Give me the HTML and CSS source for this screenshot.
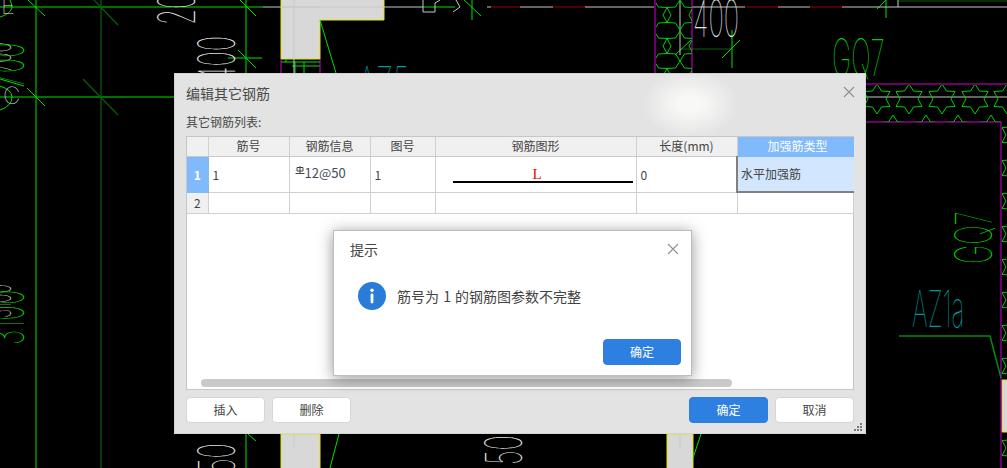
FILE: index.html
```html
<!DOCTYPE html>
<html lang="zh-CN">
<head>
<meta charset="utf-8">
<title>编辑其它钢筋</title>
<link rel="stylesheet" href="styles.css">
</head>
<body>
<main class="desktop">
  <svg class="cad" width="1007" height="468" viewBox="0 0 1007 468" aria-hidden="true">
    <defs>
      <polygon id="star" points="0,-15 4.5,-8 13,-7.5 9,0 13,7.5 4.5,8 0,15 -4.5,8 -13,7.5 -9,0 -13,-7.5 -4.5,-8"/>
      <clipPath id="bandClip"><rect x="866" y="85" width="141" height="37"/></clipPath>
      <clipPath id="colClip"><rect x="656" y="0" width="36" height="74"/></clipPath>
      <clipPath id="sideClip"><rect x="1002" y="120" width="5" height="348"/></clipPath>
    </defs>
    <!-- columns -->
    <path class="col" d="M281 -2V59H320V20H384V-2Z"/>
    <path class="col" d="M281 470V434H320V470Z"/>
    <path class="col" d="M667 470V434H693V470Z"/>
    <path class="col" d="M1002 432V380H1010V432Z"/>
    <!-- grid lines -->
    <path class="g" d="M36 0V468M0 97H174M0 7H263M246 0V73M228 58H262M246 434V468M423 7H455M472 0V20M460 -4L481 16M28 0L45 16M27 88L45 106M240 0L256 16M238 50L256 68M248 434L256 441M0 79L24 86"/>
    <path class="gd" d="M101 0V468M93 -1L118 25M83 79L118 115M898 1H1007M680 49H732"/>
    <path class="g" d="M320 20L336 73M339 434L330 468M701 434L693 458M732 30V68M722 58L740 40M675 55L691 40M886 0L877 9M886 0V18"/>
    <path class="g" d="M281 62H320M286 59V62M295 62V73M304 62V73M292 66H320M0 86Q12 90 12 97Q12 106 0 110M0 17Q10 14 12 8Q12 4 10 0"/>
    <path class="w" d="M263 7H423M294 0V73M281 7H320M487 7H491M520 7H553M585 7H654M692 7H745M778 7H810M842 7H1007M866 97H1007M680 0V55M294 434V447M680 434V447M898 0V7M423 0V12H435V3L440 0M456 0L460 7L453 12"/>
    <path class="r" d="M491 7H520M553 7H585M745 7H778M810 7H842"/>
    <path class="m" d="M281 59V73M320 59V73M655 0V73M692 0V73M866 84H1007M866 122H1001M1001 122V468"/>
    <!-- stars -->
    <g class="s" clip-path="url(#colClip)">
      <use href="#star" x="680" y="15"/><use href="#star" x="680" y="46"/><use href="#star" x="680" y="76"/>
      <use href="#star" x="654" y="15"/><use href="#star" x="654" y="46"/><use href="#star" x="654" y="76"/>
    </g>
    <g class="s" clip-path="url(#bandClip)">
      <use href="#star" x="877" y="99"/><use href="#star" x="909" y="99"/><use href="#star" x="942" y="99"/><use href="#star" x="975" y="99"/><use href="#star" x="1007" y="99"/>
      <use href="#star" x="893" y="130"/><use href="#star" x="926" y="130"/><use href="#star" x="958" y="130"/><use href="#star" x="991" y="130"/>
    </g>
    <g class="s" clip-path="url(#sideClip)">
      <use href="#star" x="1015" y="135"/><use href="#star" x="1015" y="168"/><use href="#star" x="1015" y="201"/><use href="#star" x="1015" y="234"/><use href="#star" x="1015" y="267"/><use href="#star" x="1015" y="300"/><use href="#star" x="1015" y="333"/><use href="#star" x="1015" y="366"/><use href="#star" x="1015" y="448"/>
    </g>
    <path class="gl" d="M899 336H990L1001 378"/>
    <!-- drawing labels -->
    <text class="t tw" transform="translate(195 25) rotate(-90) scale(.72 1.42)">20</text>
    <text class="t tw" transform="translate(235 82) rotate(-90) scale(.72 1.42)">400</text>
    <text class="t tw" transform="translate(693 37) scale(.72 1.42)">400</text>
    <text class="t tgreen" transform="translate(832 76) scale(.72 1.42)">GQ7</text>
    <text class="t tgreen" transform="translate(992 264) rotate(-90) scale(.72 1.42)">GQ7</text>
    <text class="t tteal" transform="translate(912 327) scale(.68 1.42)">AZ1a</text>
    <text class="t tteal" transform="translate(358 103) scale(.78 1.42)">AZ5</text>
    <text class="t tw ts" transform="translate(1 14)">E</text>
    <text class="t tw ts" transform="translate(3 104)">C</text>
    <text class="t tw ts" transform="translate(11 72) rotate(-90) scale(.72 1.42)">700</text>
    <text class="t tgreen" transform="translate(24 87) rotate(-90) scale(.72 1.42)">700</text>
    <text class="t tw ts" transform="translate(11 318) rotate(-90) scale(.66 1.42)">3100</text>
    <text class="t tgreen" transform="translate(24 345) rotate(-90) scale(.72 1.42)">3100</text>
    <text class="t tw" transform="translate(235 473) rotate(-90) scale(.72 1.42)">50</text>
    <text class="t tw" transform="translate(522 465) rotate(-90) scale(.72 1.42)">50</text>
  </svg>

  <section class="dialog">
    <header class="dialog-head">
      <h1 class="dialog-title">编辑其它钢筋</h1>
      <svg class="close" width="12" height="12" viewBox="0 0 12 12" aria-label="关闭"><path d="M1 1L11 11M11 1L1 11"/></svg>
    </header>
    <p class="list-label">其它钢筋列表:</p>
    <div class="grid-wrap">
      <table class="grid">
        <colgroup>
          <col class="c0"><col class="c1"><col class="c2"><col class="c3"><col class="c4"><col class="c5"><col class="c6">
        </colgroup>
        <thead>
          <tr>
            <th></th><th>筋号</th><th>钢筋信息</th><th>图号</th><th>钢筋图形</th><th>长度(mm)</th><th class="active-head">加强筋类型</th>
          </tr>
        </thead>
        <tbody>
          <tr class="row-tall">
            <th class="active-row">1</th>
            <td>1</td>
            <td class="steel"><svg class="bar-symbol" width="10" height="10" viewBox="0 0 10 10"><path d="M2 1.5H8V5H2ZM5 0V7.5M0.5 7.5H9.5"/></svg>12@50</td>
            <td>1</td>
            <td class="shape"><div class="shape-inner"><span class="shape-l">L</span><span class="shape-line"></span></div></td>
            <td>0</td>
            <td class="selected">水平加强筋</td>
          </tr>
          <tr class="row-short">
            <th>2</th><td></td><td></td><td></td><td></td><td></td><td></td>
          </tr>
        </tbody>
      </table>
      <div class="scroll-track"><div class="scroll-thumb"></div></div>
    </div>
    <footer class="dialog-foot">
      <button class="btn">插入</button>
      <button class="btn">删除</button>
      <span class="spacer"></span>
      <button class="btn primary">确定</button>
      <button class="btn">取消</button>
    </footer>
    <svg class="grip" width="9" height="9" viewBox="0 0 9 9" aria-hidden="true"><path d="M6 0h2v2H6zM3 3h2v2H3zM6 3h2v2H6zM0 6h2v2H0zM3 6h2v2H3zM6 6h2v2H6z"/></svg>
  </section>

  <section class="modal">
    <header class="modal-head">
      <h2 class="modal-title">提示</h2>
      <svg class="close" width="12" height="12" viewBox="0 0 12 12" aria-label="关闭"><path d="M1 1L11 11M11 1L1 11"/></svg>
    </header>
    <div class="modal-body">
      <svg class="info" width="28" height="28" viewBox="0 0 28 28" aria-hidden="true">
        <circle cx="14" cy="14" r="14" class="info-bg"/>
        <circle cx="14" cy="8.2" r="1.7" class="info-fg"/>
        <rect x="12.6" y="11.5" width="2.8" height="10" rx="1.4" class="info-fg"/>
      </svg>
      <p class="modal-text">筋号为 1 的钢筋图参数不完整</p>
    </div>
    <footer class="modal-foot"><button class="btn primary">确定</button></footer>
  </section>
</main>
</body>
</html>
```
FILE: styles.css
```css
* { box-sizing: border-box; }
html, body { margin: 0; padding: 0; background: #000; }
body { font-family: "Noto Sans CJK SC", "Liberation Sans", sans-serif; color: #444; }

.desktop { position: relative; width: 1007px; height: 468px; overflow: hidden; background: #000; }
.cad { position: absolute; left: 0; top: 0; }
.cad path, .cad polygon { fill: none; }
.cad .col { fill: #d8d8d8; stroke: #e6e600; stroke-width: 1; }
.cad .g { stroke: #00e000; stroke-width: 1; }
.cad .gd { stroke: #0a5f0a; stroke-width: 1.2; }
.cad .gl { stroke: #0a8a0a; stroke-width: 1.5; }
.cad .w { stroke: #c8c8c8; stroke-width: 1; }
.cad .r { stroke: #a00000; stroke-width: 1; }
.cad .m { stroke: #d000d0; stroke-width: 1; }
.cad .s polygon, .cad .s use { fill: none; stroke: #00d000; stroke-width: 1; }
.t { font-family: Inter, "Liberation Sans", sans-serif; font-size: 36px; font-weight: 100; }
.ts { font-size: 24px; }
.tw { fill: #e4e4e4; }
.tgreen { fill: #00d000; }
.tteal { fill: #009a9a; }

.dialog {
  position: absolute; left: 174px; top: 73px; width: 692px; height: 361px;
  display: flex; flex-direction: column; padding: 0 11px 10px 11px;
  border: 1px solid #d4d4d4;
  background:
    radial-gradient(ellipse 48px 34px at 515px 30px, #f8f8f7 25%, rgba(248,248,247,0) 100%),
    #e2e3e2;
}
.dialog-head { display: flex; align-items: center; justify-content: space-between; height: 37px; }
.dialog-title { margin: 0; font-size: 14px; font-weight: 400; line-height: 20px; color: #4a4a4a; }
.dialog .close { margin-right: -1px; margin-top: -1px; }
.close path { fill: none; stroke: #909090; stroke-width: 1.1; }
.list-label { margin: 1px 0 0; height: 24px; font-size: 12px; line-height: 20px; color: #4a4a4a; }

.grid-wrap { position: relative; flex: 1; background: #fff; border: 1px solid #c6c6c6; }
.grid { width: 666px; table-layout: fixed; border-collapse: collapse; font-size: 12px; }
.c0 { width: 21px; } .c1 { width: 81px; } .c2 { width: 81px; } .c3 { width: 65px; }
.c4 { width: 201px; } .c5 { width: 101px; } .c6 { width: 116px; }
.grid th, .grid td { border: 1px solid #d0d0d0; padding: 0; font-weight: 400; color: #444; }
.grid th { background: #f0f0f0; text-align: center; }
.grid thead th { height: 19px; line-height: 18px; border-top: 0; border-bottom-color: #c8c8c8; }
.grid th:first-child { border-left: 0; }
.grid td { text-align: left; padding: 0 3px 0 4px; background: #fff; }
.grid th.active-head { background: #80bafc; color: #fff; font-weight: 400; border-color: #80bafc; padding-left: 5px; }
.grid th.active-row { background: #80bafc; color: #fff; font-weight: 700; border-color: #80bafc; }
.row-tall { height: 36px; }
.row-short { height: 21px; }
.grid td.steel { padding-left: 5px; white-space: nowrap; font-size: 13px; line-height: 16px; padding-bottom: 2px; color: #3f4e5e; }
.bar-symbol { vertical-align: 2px; }
.bar-symbol path { fill: none; stroke: #444; stroke-width: 1; }
.grid td.shape { padding: 0 3px; }
.shape-inner { position: relative; height: 35px; }
.shape-line { position: absolute; left: 14px; top: 24px; width: 180px; height: 2px; background: #000; }
.shape-l { position: absolute; left: 94px; top: 9px; font-family: "Liberation Serif", serif; font-size: 15px; line-height: 16px; color: #f00000; }
.grid td.selected { background: #d2e7fd; padding-left: 3px; border-left: 2px solid #808080; border-bottom: 2px solid #808080; border-right: 1px solid #d2e7fd; color: #444; font-size: 12px; }

.scroll-track { position: absolute; left: 14px; right: 0; bottom: 2px; height: 8px; }
.scroll-thumb { width: 531px; height: 8px; border-radius: 4px; background: #c9c9c9; }

.dialog-foot { display: flex; gap: 7px; margin-top: 7px; height: 26px; }
.spacer { flex: 1; }
.btn {
  width: 79px; height: 26px; padding: 0; border: 1px solid #d6d6d6; border-radius: 4px;
  background: #fff; color: #444; font: 400 12px/1 "Noto Sans CJK SC", "Liberation Sans", sans-serif;
}
.btn.primary { background: #2d7fe0; border-color: #2d7fe0; color: #fff; }
.grip { position: absolute; right: 2px; bottom: 1px; }
.grip path { fill: #7c7c7c; }

.modal {
  position: absolute; left: 333px; top: 230px; width: 359px; height: 146px;
  display: flex; flex-direction: column; background: #fff;
  border: 1px solid #bdbdbd; box-shadow: 0 2px 14px rgba(0,0,0,.42);
}
.modal-head { display: flex; align-items: center; justify-content: space-between; height: 38px; padding: 0 12px 2px 16px; }
.modal-title { margin: 0; font-size: 14px; font-weight: 400; line-height: 20px; color: #444; }
.modal-body { display: flex; align-items: center; gap: 11px; height: 54px; padding: 0 0 0 24px; }
.info { flex: none; }
.info-bg { fill: #2b7cd8; }
.info-fg { fill: #fff; }
.modal-text { margin: 0; font-size: 14px; line-height: 20px; color: #444; word-spacing: 1px; }
.modal-foot { display: flex; justify-content: flex-end; flex: 1; padding: 16px 10px 0 0; }
.modal-foot .btn { width: 78px; }
```
